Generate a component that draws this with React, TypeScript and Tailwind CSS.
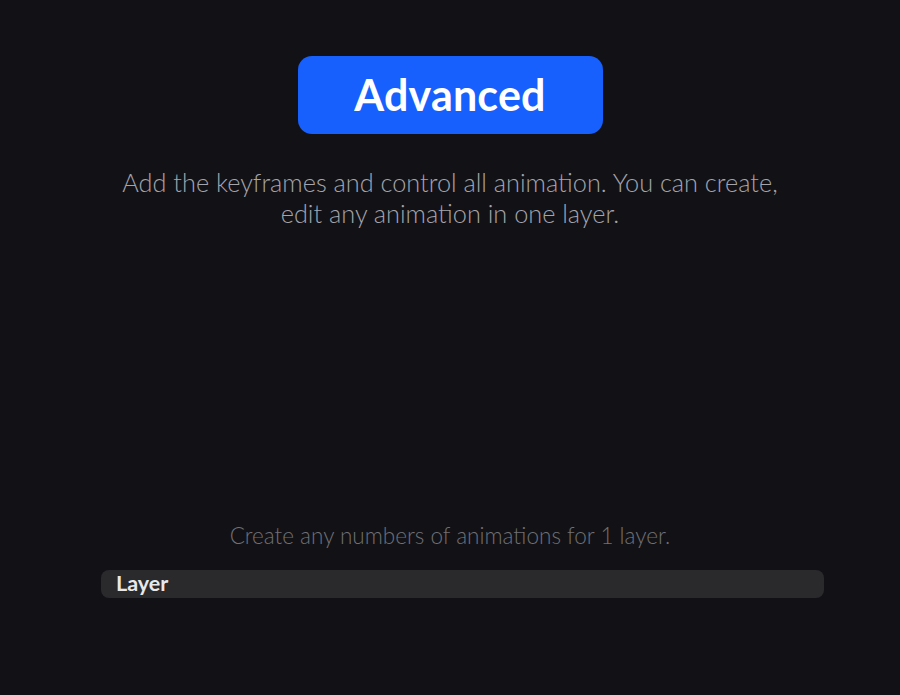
export default function App() {
  return (
    <div
      className="w-[900px] h-[695px] bg-[#121216] flex flex-col items-center overflow-hidden"
      style={{ fontFamily: 'Lato, "Open Sans", sans-serif' }}
    >
      <div className="mt-[56px] w-[305px] h-[78px] rounded-[14px] bg-[#1760fd] flex items-center justify-center">
        <span className="text-[43px] font-bold text-white tracking-[0.2px]">Advanced</span>
      </div>

      <p className="mt-[33px] w-[720px] text-center text-[25.3px] leading-[31px] font-light text-[#a4a4ac]">
        Add the keyframes and control all animation. You can create,
        <br />
        edit any animation in one layer.
      </p>

      <p className="mt-[293px] text-[22.5px] leading-[28px] font-light text-[#6f6f75]">
        Create any numbers of animations for 1 layer.
      </p>

      <div className="mt-[20px] w-[723px] h-[28px] rounded-[8px] bg-[#2a2a2d] flex items-center pl-[15px] self-start ml-[101px]">
        <span className="text-[21.5px] font-bold text-[#e8e8ea] leading-none">Layer</span>
      </div>
    </div>
  );
}
